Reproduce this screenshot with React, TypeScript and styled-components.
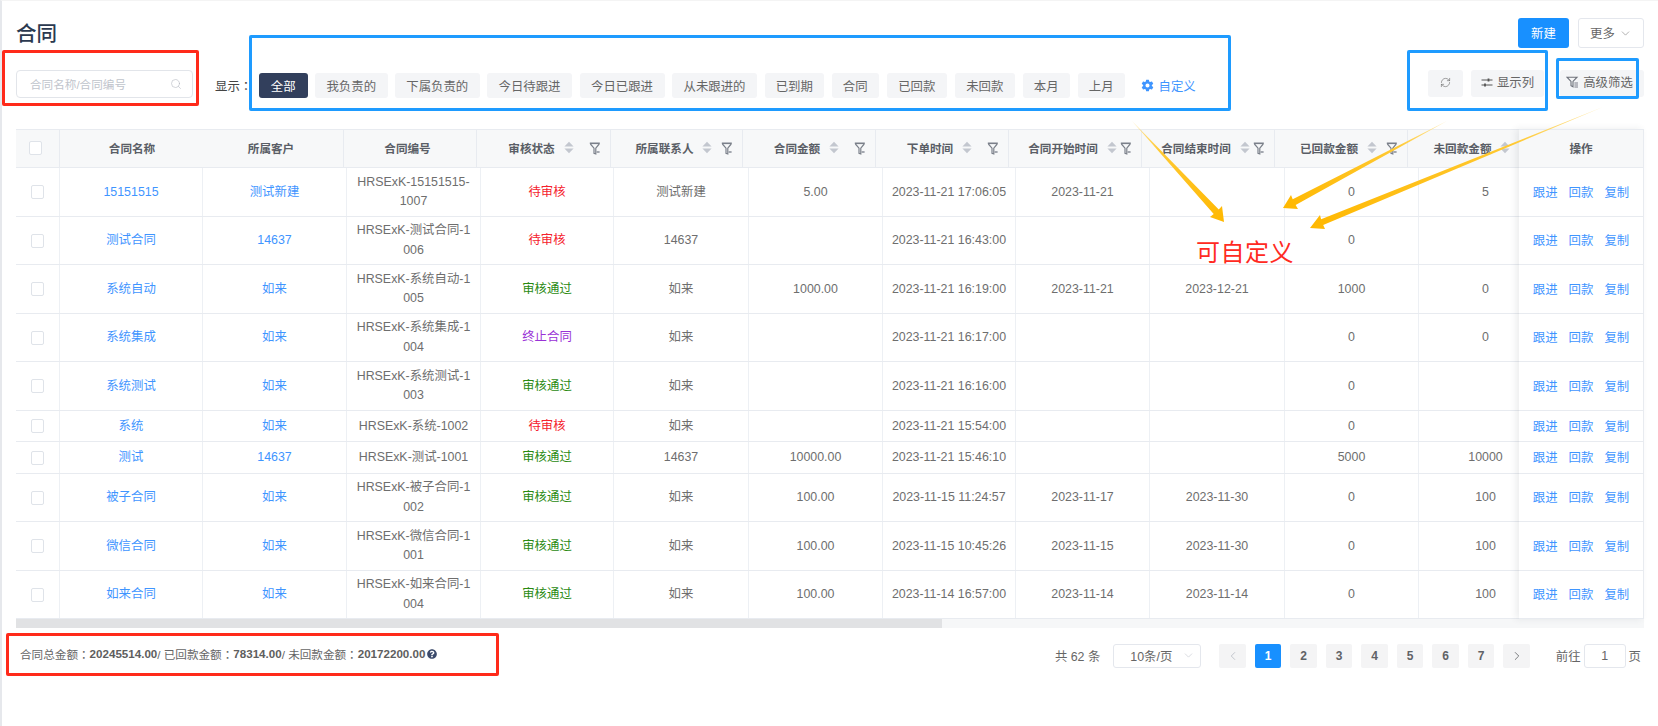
import React from "react";
import styled, { createGlobalStyle } from "styled-components";
import { Search, RefreshCw, ChevronDown, ChevronLeft, ChevronRight } from "lucide-react";
import { IoSettingsSharp } from "react-icons/io5";
import { FaQuestionCircle } from "react-icons/fa";

const Global = createGlobalStyle`
  html, body { margin: 0; padding: 0; background: #fff; }
  * { box-sizing: border-box; }
  body { font-family: "Liberation Sans", "Noto Sans CJK SC", sans-serif; font-size: 12.4px; color: #666; }
`;

const Page = styled.div`
  position: relative;
  width: 1658px;
  height: 726px;
  overflow: hidden;
  padding: 17px 14px 0 14px;
  border-left: 2px solid #e6e8ec;
  border-top: 1px solid #f4f4f4;
`;

const TitleRow = styled.div`
  display: flex;
  justify-content: space-between;
  height: 30px;
`;
const Title = styled.h1`
  margin: 4px 0 0;
  font-size: 20.5px;
  line-height: 24px;
  font-weight: 500;
  color: #2b3950;
`;
const TitleActions = styled.div`
  display: flex;
  gap: 9px;
`;
const PrimaryButton = styled.button`
  width: 51px;
  height: 30px;
  border: 0;
  border-radius: 3px;
  background: #1890ff;
  color: #fff;
  font: inherit;
  font-size: 12.4px;
`;
const MoreButton = styled.button`
  width: 66px;
  height: 30px;
  border: 1px solid #e4e7ed;
  border-radius: 3px;
  background: #fff;
  color: #666;
  font: inherit;
  display: flex;
  align-items: center;
  justify-content: center;
  gap: 4px;
`;

const Toolbar = styled.div`
  display: flex;
  align-items: flex-start;
  margin-top: 22px;
  height: 28px;
`;
const SearchBox = styled.div`
  width: 177px;
  height: 28px;
  border: 1px solid #e2e5ea;
  border-radius: 4px;
  display: flex;
  align-items: center;
  justify-content: space-between;
  padding: 0 10px 0 13px;
  color: #c0c4cc;
  font-size: 11.6px;
`;
const ShowLabel = styled.span`
  width: 44px;
  margin: 6px 0 0 22px;
  line-height: 20px;
  color: #444;
  white-space: nowrap;
`;
const Colon = styled.span`
  font-family: "Noto Sans CJK TC", sans-serif;
`;
const ChipRow = styled.div`
  display: flex;
  gap: 7.5px;
  margin-top: 3px;
  align-items: center;
`;
const Chip = styled.button<{ $active?: boolean; $w: number }>`
  width: ${(p) => p.$w}px;
  height: 25px;
  padding: 0;
  border: 0;
  border-radius: 3px;
  font: inherit;
  white-space: nowrap;
  background: ${(p) => (p.$active ? "#323f5c" : "#f4f5f7")};
  color: ${(p) => (p.$active ? "#fff" : "#666")};
`;
const CustomLink = styled.span`
  display: inline-flex;
  align-items: center;
  gap: 5px;
  margin-left: 8px;
  color: #3f95ff;
  white-space: nowrap;
`;
const ToolGroup = styled.div`
  margin-left: auto;
  display: flex;
  gap: 8px;
`;
const ToolButton = styled.button<{ $w: number; $gapAfter?: number; $shift?: number }>`
  width: ${(p) => p.$w}px;
  height: 27px;
  margin-right: ${(p) => p.$gapAfter ?? 0}px;
  border: 0;
  border-radius: 3px;
  background: #f4f5f7;
  color: #666;
  font: inherit;
  display: flex;
  align-items: center;
  justify-content: center;
  gap: 4px;
  padding: 0 ${(p) => p.$shift ?? 0}px 3px 0;
  white-space: nowrap;
`;

const TableBlock = styled.div`
  display: flex;
  margin-top: 31px;
  width: 1628px;
`;
const ScrollArea = styled.div`
  flex: 1;
  min-width: 0;
  overflow: hidden;
`;
const HeadRow = styled.div`
  display: grid;
  width: 1700px;
  height: 39px;
  grid-template-columns: 44px 144px 140px 133px 134px 132px 133px 133px 133px 133px 133px 134px;
  background: #f7f8f9;
  border-top: 1px solid #e8ebf0;
  border-bottom: 1px solid #e8ebf0;
`;
const HeadCell = styled.div<{ $noLine?: boolean }>`
  position: relative;
  display: flex;
  align-items: center;
  justify-content: center;
  gap: 9px;
  padding: 0 ${(p) => (p.$noLine ? 0 : 5)}px 2px 0;
  font-size: 11.6px;
  font-weight: 700;
  color: #5a5e66;
  white-space: nowrap;
  border-right: ${(p) => (p.$noLine ? "0" : "1px solid #e8ebf0")};
`;
const FilterSlot = styled.span`
  position: absolute;
  right: 9px;
  top: 12px;
  line-height: 0;
`;
const BodyRow = styled.div<{ $h: number }>`
  display: grid;
  width: 1700px;
  height: ${(p) => p.$h}px;
  grid-template-columns: 44px 143px 144px 134px 133px 135px 134px 133px 134px 135px 134px 134px;
  border-bottom: 1px solid #e8ebf0;
`;
const Cell = styled.div`
  display: flex;
  align-items: center;
  justify-content: center;
  text-align: center;
  white-space: pre-line;
  line-height: 19.5px;
  padding-top: 1px;
  border-right: 1.5px solid #edf0f4;
  color: #6e6e6e;
`;
const LinkText = styled.span`
  color: #3f95ff;
`;
const Status = styled.span<{ $c: string }>`
  color: ${(p) => p.$c};
`;
const Check = styled.span`
  display: block;
  width: 13px;
  height: 14px;
  border: 1px solid #dfe3e9;
  border-radius: 2px;
  background: #fff;
`;

const FixedColumn = styled.div`
  flex: none;
  width: 125px;
  background: #fff;
  box-shadow: -3px 0 7px rgba(40, 50, 70, 0.09);
  border-right: 1px solid #e8ebf0;
`;
const FixedHead = styled.div`
  height: 39px;
  display: flex;
  align-items: center;
  justify-content: center;
  padding-bottom: 2px;
  font-size: 11.6px;
  font-weight: 700;
  color: #5a5e66;
  background: #f7f8f9;
  border-top: 1px solid #e8ebf0;
  border-bottom: 1px solid #e8ebf0;
`;
const FixedRow = styled.div<{ $h: number }>`
  height: ${(p) => p.$h}px;
  display: flex;
  align-items: center;
  justify-content: center;
  gap: 11px;
  color: #3f95ff;
  border-bottom: 1px solid #e8ebf0;
`;

const ScrollTrack = styled.div`
  width: 1628px;
  height: 9px;
  background: #f6f7f8;
`;
const ScrollThumb = styled.div`
  width: 926px;
  height: 9px;
  background: #e1e2e4;
`;

const Footer = styled.div`
  display: flex;
  align-items: flex-start;
  justify-content: space-between;
  margin-top: 16px;
  padding: 0 3px 0 4px;
`;
const Summary = styled.div`
  display: flex;
  align-items: center;
  height: 20px;
  font-size: 11.6px;
  color: #666;
  white-space: pre;
`;
const SummaryValue = styled.b`
  font-weight: 700;
  color: #5e5e5e;
`;
const HelpIcon = styled.span`
  display: inline-flex;
  margin-left: 2px;
  color: #3b4a6b;
`;
const Pager = styled.div`
  display: flex;
  align-items: center;
  height: 24px;
  color: #666;
`;
const Total = styled.span`
  margin-right: 13px;
`;
const PageSize = styled.div`
  width: 88px;
  height: 24px;
  margin-right: 18px;
  border: 1px solid #e4e7ed;
  border-radius: 3px;
  display: flex;
  align-items: center;
  justify-content: space-between;
  padding: 0 5px 0 16px;
  color: #c0c4cc;
`;
const PageSizeText = styled.span`
  color: #666;
`;
const PageButtons = styled.div`
  display: flex;
  gap: 9px;
`;
const PageBtn = styled.span<{ $active?: boolean; $muted?: boolean }>`
  width: 26.5px;
  height: 24px;
  border-radius: 2px;
  display: flex;
  align-items: center;
  justify-content: center;
  font-size: 12px;
  font-weight: 700;
  background: ${(p) => (p.$active ? "#1890ff" : "#f4f4f5")};
  color: ${(p) => (p.$active ? "#fff" : p.$muted ? "#b8bcc4" : "#606266")};
`;
const Jump = styled.div`
  display: flex;
  align-items: center;
  gap: 3px;
  margin-left: 26px;
`;
const JumpInput = styled.div`
  width: 42px;
  height: 24px;
  border: 1px solid #e4e7ed;
  border-radius: 3px;
  display: flex;
  align-items: center;
  justify-content: center;
`;

const Mark = styled.div<{ $x: number; $y: number; $w: number; $h: number; $c: string }>`
  position: absolute;
  left: ${(p) => p.$x - 2}px;
  top: ${(p) => p.$y - 1}px;
  width: ${(p) => p.$w}px;
  height: ${(p) => p.$h}px;
  border: 3px solid ${(p) => p.$c};
  border-radius: 2px;
  pointer-events: none;
`;
const ArrowLayer = styled.svg`
  position: absolute;
  left: -2px;
  top: -1px;
  pointer-events: none;
`;
const Callout = styled.div`
  position: absolute;
  left: 1194px;
  top: 236px;
  font-size: 24px;
  line-height: 32px;
  color: #ff2a22;
  letter-spacing: 0.5px;
  white-space: nowrap;
`;

const Sort = () => (
  <svg width="10" height="13" viewBox="0 0 10 13" fill="#c3c7cf">
    <path d="M5 0.8 9.6 5.6H0.4Z" />
    <path d="M5 12.2 0.4 7.4H9.6Z" />
  </svg>
);
const HeadFunnel = () => (
  <svg width="12" height="13" viewBox="0 0 12 13" fill="none" stroke="#7b808a">
    <path d="M0.8 1.3H10.8" strokeWidth="1.6" />
    <path d="M1.4 2 5 6.2V11.4L6.8 12V6.2L10.2 2" strokeWidth="1.2" />
    <path d="M7.4 9H10.6V11H7.4Z" fill="#a4a8b0" stroke="none" />
  </svg>
);
const ToolFunnel = () => (
  <svg width="13" height="12" viewBox="0 0 13 12" fill="none" stroke="#6d717a" strokeWidth="1.1">
    <path d="M1 1.2H11L7 5.4V10.8L5 9.6V5.4Z" />
    <path d="M8.4 7H12M8.4 9H12M8.4 11H12" strokeWidth="0.9" />
  </svg>
);
const Sliders = () => (
  <svg width="12" height="11" viewBox="0 0 12 11" fill="none" stroke="#555">
    <path d="M0.5 3H11.5M0.5 8H11.5" strokeWidth="1" />
    <path d="M7.5 1.4V4.6M4 6.4V9.6" strokeWidth="1.8" />
  </svg>
);

type Row = {
  h: number;
  name: string;
  customer: string;
  no: string;
  status: string;
  contact: string;
  amount: string;
  placed: string;
  start: string;
  end: string;
  back: string;
  rest: string;
};

const STATUS: Record<string, string> = {
  待审核: "#f5222d",
  审核通过: "#2a8a12",
  终止合同: "#9a32d6",
};

const rows: Row[] = [
  { h: 48.5, name: "15151515", customer: "测试新建", no: "HRSExK-15151515-\n1007", status: "待审核", contact: "测试新建", amount: "5.00", placed: "2023-11-21 17:06:05", start: "2023-11-21", end: "", back: "0", rest: "5" },
  { h: 48.5, name: "测试合同", customer: "14637", no: "HRSExK-测试合同-1\n006", status: "待审核", contact: "14637", amount: "", placed: "2023-11-21 16:43:00", start: "", end: "", back: "0", rest: "" },
  { h: 48.5, name: "系统自动", customer: "如来", no: "HRSExK-系统自动-1\n005", status: "审核通过", contact: "如来", amount: "1000.00", placed: "2023-11-21 16:19:00", start: "2023-11-21", end: "2023-12-21", back: "1000", rest: "0" },
  { h: 48.5, name: "系统集成", customer: "如来", no: "HRSExK-系统集成-1\n004", status: "终止合同", contact: "如来", amount: "", placed: "2023-11-21 16:17:00", start: "", end: "", back: "0", rest: "0" },
  { h: 48.5, name: "系统测试", customer: "如来", no: "HRSExK-系统测试-1\n003", status: "审核通过", contact: "如来", amount: "", placed: "2023-11-21 16:16:00", start: "", end: "", back: "0", rest: "" },
  { h: 31.5, name: "系统", customer: "如来", no: "HRSExK-系统-1002", status: "待审核", contact: "如来", amount: "", placed: "2023-11-21 15:54:00", start: "", end: "", back: "0", rest: "" },
  { h: 31.5, name: "测试", customer: "14637", no: "HRSExK-测试-1001", status: "审核通过", contact: "14637", amount: "10000.00", placed: "2023-11-21 15:46:10", start: "", end: "", back: "5000", rest: "10000" },
  { h: 48.5, name: "被子合同", customer: "如来", no: "HRSExK-被子合同-1\n002", status: "审核通过", contact: "如来", amount: "100.00", placed: "2023-11-15 11:24:57", start: "2023-11-17", end: "2023-11-30", back: "0", rest: "100" },
  { h: 48.5, name: "微信合同", customer: "如来", no: "HRSExK-微信合同-1\n001", status: "审核通过", contact: "如来", amount: "100.00", placed: "2023-11-15 10:45:26", start: "2023-11-15", end: "2023-11-30", back: "0", rest: "100" },
  { h: 48, name: "如来合同", customer: "如来", no: "HRSExK-如来合同-1\n004", status: "审核通过", contact: "如来", amount: "100.00", placed: "2023-11-14 16:57:00", start: "2023-11-14", end: "2023-11-14", back: "0", rest: "100" },
];

const chips: [string, number][] = [
  ["全部", 48.5], ["我负责的", 72.5], ["下属负责的", 84.5], ["今日待跟进", 85], ["今日已跟进", 85],
  ["从未跟进的", 85], ["已到期", 59.5], ["合同", 47.5], ["已回款", 60.5], ["未回款", 60.5], ["本月", 47.5], ["上月", 47.5],
];

const headers: { t: string; sort?: boolean; filter?: boolean }[] = [
  { t: "审核状态", sort: true, filter: true },
  { t: "所属联系人", sort: true, filter: true },
  { t: "合同金额", sort: true, filter: true },
  { t: "下单时间", sort: true, filter: true },
  { t: "合同开始时间", sort: true, filter: true },
  { t: "合同结束时间", sort: true, filter: true },
  { t: "已回款金额", sort: true, filter: true },
  { t: "未回款金额", sort: true },
];

type P = [number, number];
const lerp = (a: P, b: P, t: number): P => [a[0] + (b[0] - a[0]) * t, a[1] + (b[1] - a[1]) * t];
const arrows: { id: string; start: P; tip: P; a: P; b: P }[] = [
  { id: "ar1", start: [1132, 121], tip: [1224, 222], a: [1210, 217], b: [1222, 206] },
  { id: "ar2", start: [1447, 121], tip: [1283, 208], a: [1298, 209], b: [1291, 195] },
  { id: "ar3", start: [1603, 107], tip: [1310, 228], a: [1325, 229], b: [1320, 215] },
];

const Arrows = () => (
  <ArrowLayer width="1658" height="726" viewBox="0 0 1658 726">
    <defs>
      {arrows.map((r) => (
        <linearGradient key={r.id} id={r.id} gradientUnits="userSpaceOnUse" x1={r.start[0]} y1={r.start[1]} x2={r.tip[0]} y2={r.tip[1]}>
          <stop offset="0" stopColor="#ffe9a8" />
          <stop offset="0.3" stopColor="#ffc933" />
          <stop offset="1" stopColor="#ffb800" />
        </linearGradient>
      ))}
    </defs>
    {arrows.map((r) => {
      const mid = lerp(r.a, r.b, 0.5);
      const neck = lerp(mid, r.tip, 0.05);
      const na = lerp(neck, r.a, 0.42);
      const nb = lerp(neck, r.b, 0.42);
      const pts = [r.start, na, r.a, r.tip, r.b, nb].map((p) => p.join(",")).join(" ");
      return <polygon key={r.id} points={pts} fill={`url(#${r.id})`} />;
    })}
  </ArrowLayer>
);

export default function App() {
  return (
    <Page>
      <Global />
      <TitleRow>
        <Title>合同</Title>
        <TitleActions>
          <PrimaryButton>新建</PrimaryButton>
          <MoreButton>
            更多 <ChevronDown size={13} strokeWidth={1.2} color="#888" />
          </MoreButton>
        </TitleActions>
      </TitleRow>

      <Toolbar>
        <SearchBox>
          合同名称/合同编号
          <Search size={12} strokeWidth={1.2} color="#b5b9c1" />
        </SearchBox>
        <ShowLabel>
          显示<Colon>：</Colon>
        </ShowLabel>
        <ChipRow>
          {chips.map(([t, w], i) => (
            <Chip key={t} $w={w} $active={i === 0}>
              {t}
            </Chip>
          ))}
          <CustomLink>
            <IoSettingsSharp size={13} />
            自定义
          </CustomLink>
        </ChipRow>
        <ToolGroup>
          <ToolButton $w={35}>
            <RefreshCw size={11} strokeWidth={1.3} color="#666" />
          </ToolButton>
          <ToolButton $w={73} $gapAfter={8}>
            <Sliders />
            显示列
          </ToolButton>
          <ToolButton $w={84} $shift={5}>
            <ToolFunnel />
            高级筛选
          </ToolButton>
        </ToolGroup>
      </Toolbar>

      <TableBlock>
        <ScrollArea>
          <HeadRow>
            <HeadCell>
              <Check />
            </HeadCell>
            <HeadCell $noLine>合同名称</HeadCell>
            <HeadCell>所属客户</HeadCell>
            <HeadCell>合同编号</HeadCell>
            {headers.map((h) => (
              <HeadCell key={h.t}>
                {h.t}
                {h.sort && <Sort />}
                {h.filter && (
                  <FilterSlot>
                    <HeadFunnel />
                  </FilterSlot>
                )}
              </HeadCell>
            ))}
          </HeadRow>
          {rows.map((r) => (
            <BodyRow key={r.no} $h={r.h}>
              <Cell>
                <Check />
              </Cell>
              <Cell>
                <LinkText>{r.name}</LinkText>
              </Cell>
              <Cell>
                <LinkText>{r.customer}</LinkText>
              </Cell>
              <Cell>{r.no}</Cell>
              <Cell>
                <Status $c={STATUS[r.status]}>{r.status}</Status>
              </Cell>
              <Cell>{r.contact}</Cell>
              <Cell>{r.amount}</Cell>
              <Cell>{r.placed}</Cell>
              <Cell>{r.start}</Cell>
              <Cell>{r.end}</Cell>
              <Cell>{r.back}</Cell>
              <Cell>{r.rest}</Cell>
            </BodyRow>
          ))}
        </ScrollArea>
        <FixedColumn>
          <FixedHead>操作</FixedHead>
          {rows.map((r) => (
            <FixedRow key={r.no} $h={r.h}>
              <span>跟进</span>
              <span>回款</span>
              <span>复制</span>
            </FixedRow>
          ))}
        </FixedColumn>
      </TableBlock>
      <ScrollTrack>
        <ScrollThumb />
      </ScrollTrack>

      <Footer>
        <Summary>
          合同总金额<Colon>：</Colon>
          <SummaryValue>20245514.00</SummaryValue>/ 已回款金额<Colon>：</Colon>
          <SummaryValue>78314.00</SummaryValue>/ 未回款金额<Colon>：</Colon>
          <SummaryValue>20172200.00</SummaryValue>
          <HelpIcon>
            <FaQuestionCircle size={10} />
          </HelpIcon>
        </Summary>
        <Pager>
          <Total>共 62 条</Total>
          <PageSize>
            <PageSizeText>10条/页</PageSizeText>
            <ChevronDown size={13} strokeWidth={1.1} />
          </PageSize>
          <PageButtons>
            <PageBtn $muted>
              <ChevronLeft size={14} strokeWidth={1.4} />
            </PageBtn>
            {[1, 2, 3, 4, 5, 6, 7].map((n) => (
              <PageBtn key={n} $active={n === 1}>
                {n}
              </PageBtn>
            ))}
            <PageBtn>
              <ChevronRight size={14} strokeWidth={1.4} />
            </PageBtn>
          </PageButtons>
          <Jump>
            <span>前往</span>
            <JumpInput>1</JumpInput>
            <span>页</span>
          </Jump>
        </Pager>
      </Footer>

      <Mark $x={2} $y={50} $w={197} $h={56} $c="#ff2a1a" />
      <Mark $x={249} $y={35} $w={982} $h={76} $c="#1e9bff" />
      <Mark $x={1407} $y={50} $w={141} $h={61} $c="#1e9bff" />
      <Mark $x={1556} $y={58} $w={83} $h={41} $c="#1e9bff" />
      <Mark $x={6} $y={633} $w={493} $h={43} $c="#ff2a1a" />
      <Arrows />
      <Callout>可自定义</Callout>
    </Page>
  );
}
